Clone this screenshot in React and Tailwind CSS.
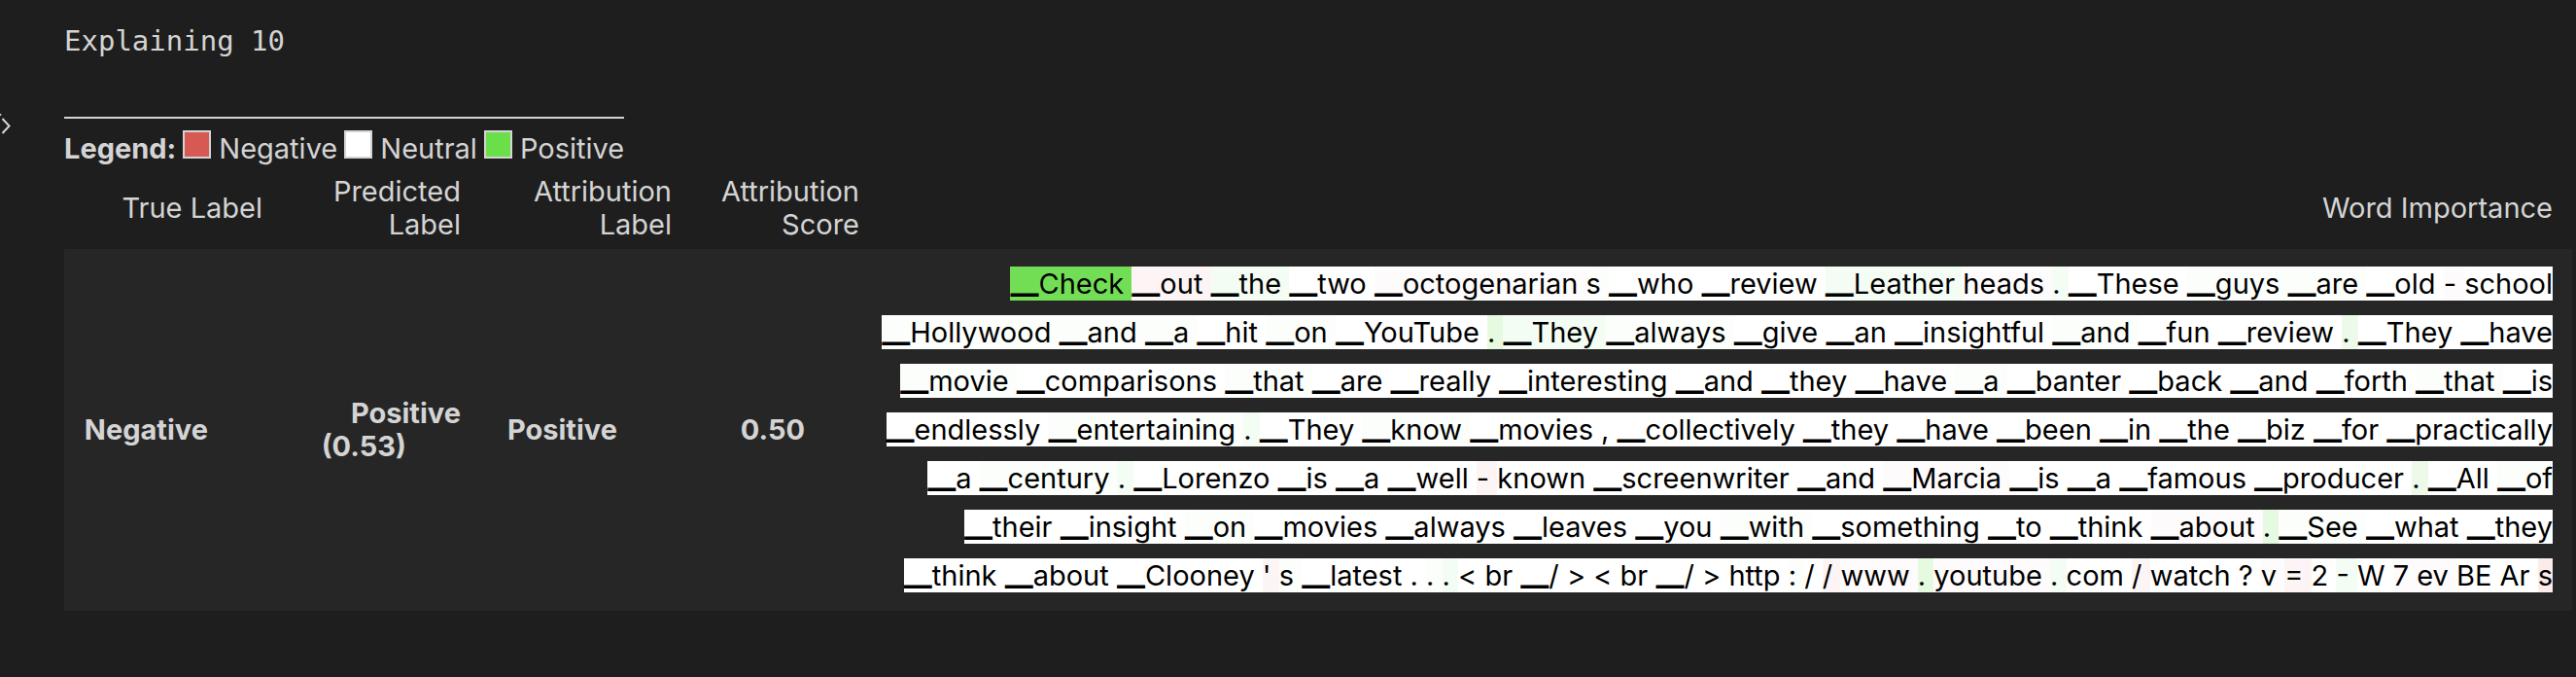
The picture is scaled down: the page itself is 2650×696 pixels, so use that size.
const COLORS = {
  p0: 'bg-[#fbfefb]',
  p1: 'bg-[#f4fdf4]',
  p2: 'bg-[#edfaea]',
  p3: 'bg-[#e6fae2]',
  p9: 'bg-[#72de55]',
  n0: 'bg-[#fefbfc]',
  n1: 'bg-[#fdf5f5]',
  n2: 'bg-[#fbebea]',
  w: 'bg-white',
};

// Each token may carry a "|level" suffix; tokens without one are neutral.
const LINES = [
  '▁Check|p9 ▁out|n1 ▁the|p1 ▁two ▁octogenarian|n0 s|p0 ▁who ▁review ▁Leather|p1 heads|n0 .|p1 ▁These ▁guys|p0 ▁are|p0 ▁old -|n0 school',
  '▁Hollywood|p0 ▁and|p0 ▁a|p0 ▁hit ▁on|p0 ▁YouTube .|p3 ▁They|p1 ▁always|p0 ▁give ▁an ▁insightful ▁and|p0 ▁fun ▁review .|p2 ▁They ▁have',
  '▁movie|p0 ▁comparisons ▁that|p0 ▁are ▁really ▁interesting ▁and ▁they ▁have ▁a|p0 ▁banter ▁back ▁and ▁forth ▁that|p0 ▁is',
  '▁endlessly ▁entertaining|p0 .|p1 ▁They ▁know|p0 ▁movies , ▁collectively ▁they ▁have ▁been ▁in ▁the ▁biz ▁for ▁practically',
  '▁a ▁century|p0 .|p1 ▁Lorenzo ▁is ▁a ▁well -|n1 known ▁screenwriter ▁and ▁Marcia|n0 ▁is ▁a ▁famous ▁producer .|p2 ▁All ▁of|p0',
  '▁their ▁insight ▁on|p0 ▁movies ▁always ▁leaves ▁you ▁with|p0 ▁something ▁to ▁think ▁about|n0 .|p3 ▁See|p0 ▁what ▁they',
  "▁think ▁about ▁Clooney '|n1 s|p0 ▁latest . .|p0 .|p1 < br ▁/ > < br ▁/ > http :|p0 / /|n1 www|n0 .|p3 youtube|n0 .|p1 com /|n1 watch ? v|n0 =|n1 2 -|p1 W 7|n0 ev|n0 BE Ar s|n2",
].map((line) =>
  line.split(' ').map((part) => {
    const [text, level = 'w'] = part.split('|');
    return { text, level };
  })
);

function Swatch({ color, label }) {
  return (
    <span className="flex items-end gap-2">
      <span className={`size-[29px] border-2 border-[#d4d4d4] mb-[7px] ${color}`} />
      {label}
    </span>
  );
}

function Score({ children }) {
  return <b className="pr-14 font-bold">{children}</b>;
}

export default function App() {
  return (
    <main className="flex min-h-screen bg-[#1e1e1e] pb-16 font-['Inter','Noto_Sans_CJK_SC',sans-serif] text-[29px] leading-[34px] text-[#d4d4d4]">
      <div className="w-[66px] shrink-0 pt-[116px]">
        <svg viewBox="0 0 12 22" className="h-[22px] w-3" fill="none" stroke="#d4d4d4" strokeWidth="2">
          <path d="M0 1.5 L1 2.5 M2.5 6 L9.5 13.5 L2.5 21" />
        </svg>
      </div>
      <div className="min-w-0 flex-1 pr-1">
        <pre className="pt-[25px] pb-[61px] font-['DejaVu_Sans_Mono',monospace] leading-[34px]">Explaining 10</pre>
        <div className="inline-flex items-end gap-[7px] border-t-2 border-[#d4d4d4] pt-3 align-top">
          <b className="font-bold">Legend:</b>
          <Swatch color="bg-[#d65a53]" label="Negative" />
          <Swatch color="bg-white" label="Neutral" />
          <Swatch color="bg-[#6bdf4a]" label="Positive" />
        </div>
        <table className="w-full table-fixed text-right">
          <colgroup>
            <col className="w-[224px]" />
            <col className="w-[204px]" />
            <col className="w-[217px]" />
            <col className="w-[193px]" />
            <col />
          </colgroup>
          <thead>
            <tr>
              {['True Label', 'Predicted Label', 'Attribution Label', 'Attribution Score', 'Word Importance'].map((h) => (
                <th key={h} className="pt-[10px] pr-5 pb-2 pl-7 font-normal">
                  {h}
                </th>
              ))}
            </tr>
          </thead>
          <tbody>
            <tr className="bg-[#262626]">
              <td className="px-5"><Score>Negative</Score></td>
              <td className="px-5"><Score>Positive (0.53)</Score></td>
              <td className="px-5"><Score>Positive</Score></td>
              <td className="px-5"><Score>0.50</Score></td>
              <td className="py-[11px] pr-5 leading-[50px] text-black">
                {LINES.map((tokens, i) => (
                  <div key={i} className="whitespace-nowrap">
                    {tokens.map(({ text, level }, j) => (
                      <mark key={j} className={`text-black ${COLORS[level]}`}>
                        {j < tokens.length - 1 ? `${text} ` : text}
                      </mark>
                    ))}
                  </div>
                ))}
              </td>
            </tr>
          </tbody>
        </table>
      </div>
    </main>
  );
}
